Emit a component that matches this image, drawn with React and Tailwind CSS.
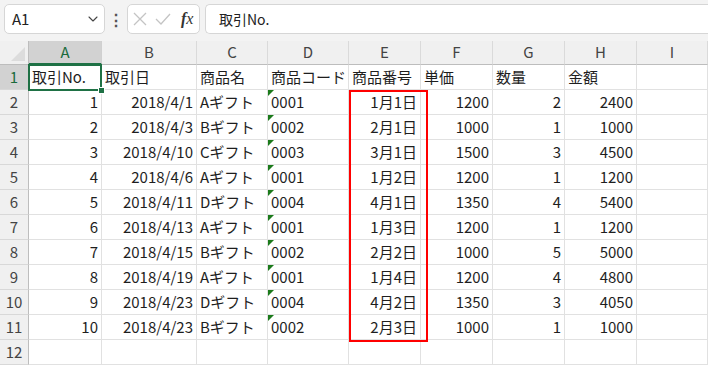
import { ChevronDown } from "lucide-react";

const cols = ["A", "B", "C", "D", "E", "F", "G", "H", "I"];

const rows = [
  [1, "2018/4/1", "Aギフト", "0001", "1月1日", 1200, 2, 2400],
  [2, "2018/4/3", "Bギフト", "0002", "2月1日", 1000, 1, 1000],
  [3, "2018/4/10", "Cギフト", "0003", "3月1日", 1500, 3, 4500],
  [4, "2018/4/6", "Aギフト", "0001", "1月2日", 1200, 1, 1200],
  [5, "2018/4/11", "Dギフト", "0004", "4月1日", 1350, 4, 5400],
  [6, "2018/4/13", "Aギフト", "0001", "1月3日", 1200, 1, 1200],
  [7, "2018/4/15", "Bギフト", "0002", "2月2日", 1000, 5, 5000],
  [8, "2018/4/19", "Aギフト", "0001", "1月4日", 1200, 4, 4800],
  [9, "2018/4/23", "Dギフト", "0004", "4月2日", 1350, 3, 4050],
  [10, "2018/4/23", "Bギフト", "0002", "2月3日", 1000, 1, 1000],
];

const headers = ["取引No.", "取引日", "商品名", "商品コード", "商品番号", "単価", "数量", "金額", ""];

// alignment per data column: r = right, l = left
const align = ["r", "r", "l", "l", "r", "r", "r", "r", "l"];

function RowHead({ n, active }) {
  return (
    <div
      className={
        "h-[25px] flex items-center justify-center border-r border-r-[#bdbdbd] border-b border-b-[#d8d8d8] text-[15px] " +
        (active ? "bg-[#d2d2d2] text-[#1a6b3c]" : "bg-[#f0f0f0] text-[#444]")
      }
    >
      {n}
    </div>
  );
}

function Cell({ children, right, tri }) {
  return (
    <div
      className={
        "relative h-[25px] flex items-center border-r border-b border-[#e1e1e1] px-[3px] text-[15px] text-[#1e1e1e] whitespace-nowrap overflow-visible " +
        (right ? "justify-end" : "justify-start")
      }
    >
      {tri && (
        <span className="absolute left-0 top-0 w-0 h-0 border-t-[6px] border-t-[#1b7a1b] border-r-[6px] border-r-transparent" />
      )}
      {children}
    </div>
  );
}

export default function App() {
  return (
    <div
      className="w-[708px] h-[367px] overflow-hidden bg-white select-none"
      style={{ fontFamily: '"Noto Sans CJK JP", "Noto Sans", sans-serif' }}
    >
      {/* formula bar */}
      <div className="h-[41px] bg-[#f3f3f3] flex items-start pt-[4px] pl-[4px] gap-0">
        <div className="w-[101px] h-[30px] bg-white border border-[#d6d6d6] rounded-[5px] flex items-center justify-between pl-[7px] pr-[3px] text-[15px] text-[#222]">
          <span>A1</span>
          <ChevronDown size={16} strokeWidth={1.6} className="text-[#444]" />
        </div>
        <div className="w-[22px] h-[30px] flex items-center justify-center text-[#555] text-[16px] font-bold">⋮</div>
        <div className="w-[73px] h-[30px] bg-white border border-[#d6d6d6] rounded-[5px] flex items-center pl-[5px] gap-[8px]">
          <svg width="14" height="14" viewBox="0 0 14 14">
            <path d="M1 1 L13 13 M13 1 L1 13" stroke="#c4c4c4" strokeWidth="1.3" fill="none" />
          </svg>
          <svg width="16" height="14" viewBox="0 0 16 14">
            <path d="M1 7 L6 12 L15 2" stroke="#c4c4c4" strokeWidth="1.3" fill="none" />
          </svg>
          <span
            className="text-[16px] italic text-[#333] ml-[2px]"
            style={{ fontFamily: '"Liberation Serif", "DejaVu Serif", serif' }}
          >
            <span className="font-bold">f</span>x
          </span>
        </div>
        <div className="ml-[5px] flex-1 h-[30px] bg-white border border-r-0 border-[#d6d6d6] rounded-l-[5px] flex items-center pl-[13px] text-[14px] text-[#222]">
          取引No.
        </div>
      </div>

      {/* sheet */}
      <div className="relative grid grid-cols-[29px_73px_95px_71px_81px_72px_72px_72px_72px_1fr]">
        {/* column headers */}
        <div className="h-[24px] bg-[#f0f0f0] border-r border-r-[#bdbdbd] border-b border-b-[#bdbdbd] flex items-end justify-end p-[3px]">
          <span className="w-0 h-0 border-b-[14px] border-b-[#dcdcdc] border-l-[14px] border-l-transparent" />
        </div>
        {cols.map((c, i) => (
          <div
            key={c}
            className={
              "h-[24px] flex items-center justify-center border-b text-[15px] " +
              (i === 0
                ? "bg-[#d2d2d2] text-[#1a6b3c] border-b-[#1f7145] border-b-2 border-r border-r-[#d0d0d0]"
                : "bg-[#f0f0f0] text-[#444] border-b-[#bdbdbd] border-r border-r-[#dadada]")
            }
          >
            {c}
          </div>
        ))}

        {/* row 1 */}
        <RowHead n={1} active />
        {headers.map((h, i) => (
          <div
            key={i}
            className="relative h-[25px] flex items-center border-r border-b border-[#e1e1e1] px-[3px] text-[15px] text-[#1e1e1e] whitespace-nowrap"
          >
            {h}
          </div>
        ))}

        {/* data rows */}
        {rows.map((r, ri) => (
          <>
            <RowHead key={"h" + ri} n={ri + 2} />
            {r.map((v, ci) => (
              <Cell key={ri + "-" + ci} right={align[ci] === "r"} tri={ci === 3}>
                {v}
              </Cell>
            ))}
            <Cell key={ri + "-x"} />
          </>
        ))}

        {/* row 12 */}
        <RowHead n={12} />
        {cols.map((c) => (
          <Cell key={"e" + c} />
        ))}

        {/* active cell A1 */}
        <div className="absolute left-[28px] top-[23px] w-[74px] h-[27px] border-2 border-[#1f7145] pointer-events-none z-10" />
        <div className="absolute left-[98px] top-[46px] w-[7px] h-[7px] bg-[#1f7145] border border-white z-20" />

        {/* highlight box around 商品番号 values */}
        <div className="absolute left-[349px] top-[49px] w-[79px] h-[252px] border-2 border-[#ff0000] pointer-events-none z-10" />
      </div>
    </div>
  );
}
